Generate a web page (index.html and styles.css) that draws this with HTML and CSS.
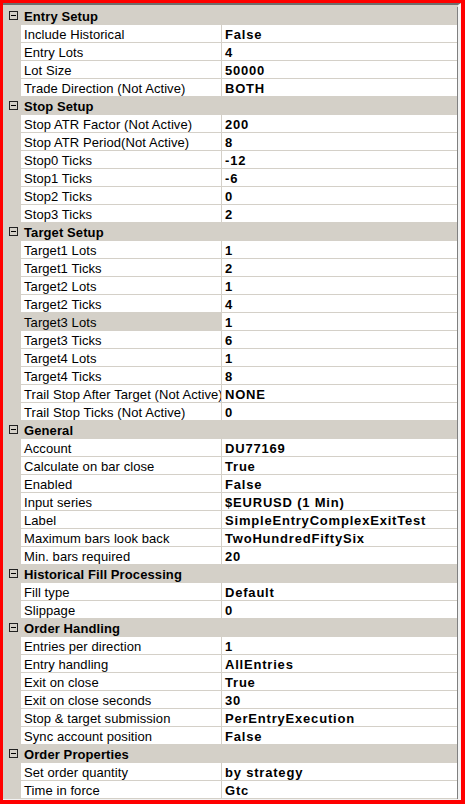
FILE: index.html
```html
<!DOCTYPE html>
<html>
<head>
<meta charset="utf-8">
<link rel="stylesheet" href="styles.css">
</head>
<body>
<div class="frame">
  <div class="grid">
    <div class="cat"><span class="box"></span><span class="cat-name">Entry Setup</span></div>
    <div class="row"><span class="name">Include Historical</span><span class="val">False</span></div>
    <div class="row"><span class="name">Entry Lots</span><span class="val">4</span></div>
    <div class="row"><span class="name">Lot Size</span><span class="val">50000</span></div>
    <div class="row"><span class="name">Trade Direction (Not Active)</span><span class="val">BOTH</span></div>

    <div class="cat"><span class="box"></span><span class="cat-name">Stop Setup</span></div>
    <div class="row"><span class="name">Stop ATR Factor (Not Active)</span><span class="val">200</span></div>
    <div class="row"><span class="name">Stop ATR Period(Not Active)</span><span class="val">8</span></div>
    <div class="row"><span class="name">Stop0 Ticks</span><span class="val">-12</span></div>
    <div class="row"><span class="name">Stop1 Ticks</span><span class="val">-6</span></div>
    <div class="row"><span class="name">Stop2 Ticks</span><span class="val">0</span></div>
    <div class="row"><span class="name">Stop3 Ticks</span><span class="val">2</span></div>

    <div class="cat"><span class="box"></span><span class="cat-name">Target Setup</span></div>
    <div class="row"><span class="name">Target1 Lots</span><span class="val">1</span></div>
    <div class="row"><span class="name">Target1 Ticks</span><span class="val">2</span></div>
    <div class="row"><span class="name">Target2 Lots</span><span class="val">1</span></div>
    <div class="row"><span class="name">Target2 Ticks</span><span class="val">4</span></div>
    <div class="row selected"><span class="name">Target3 Lots</span><span class="val">1</span></div>
    <div class="row"><span class="name">Target3 Ticks</span><span class="val">6</span></div>
    <div class="row"><span class="name">Target4 Lots</span><span class="val">1</span></div>
    <div class="row"><span class="name">Target4 Ticks</span><span class="val">8</span></div>
    <div class="row"><span class="name">Trail Stop After Target (Not Active)</span><span class="val">NONE</span></div>
    <div class="row"><span class="name">Trail Stop Ticks (Not Active)</span><span class="val">0</span></div>

    <div class="cat"><span class="box"></span><span class="cat-name">General</span></div>
    <div class="row"><span class="name">Account</span><span class="val">DU77169</span></div>
    <div class="row"><span class="name">Calculate on bar close</span><span class="val">True</span></div>
    <div class="row"><span class="name">Enabled</span><span class="val">False</span></div>
    <div class="row"><span class="name">Input series</span><span class="val">$EURUSD (1 Min)</span></div>
    <div class="row"><span class="name">Label</span><span class="val">SimpleEntryComplexExitTest</span></div>
    <div class="row"><span class="name">Maximum bars look back</span><span class="val">TwoHundredFiftySix</span></div>
    <div class="row"><span class="name">Min. bars required</span><span class="val">20</span></div>

    <div class="cat"><span class="box"></span><span class="cat-name">Historical Fill Processing</span></div>
    <div class="row"><span class="name">Fill type</span><span class="val">Default</span></div>
    <div class="row"><span class="name">Slippage</span><span class="val">0</span></div>

    <div class="cat"><span class="box"></span><span class="cat-name">Order Handling</span></div>
    <div class="row"><span class="name">Entries per direction</span><span class="val">1</span></div>
    <div class="row"><span class="name">Entry handling</span><span class="val">AllEntries</span></div>
    <div class="row"><span class="name">Exit on close</span><span class="val">True</span></div>
    <div class="row"><span class="name">Exit on close seconds</span><span class="val">30</span></div>
    <div class="row"><span class="name">Stop &amp; target submission</span><span class="val">PerEntryExecution</span></div>
    <div class="row"><span class="name">Sync account position</span><span class="val">False</span></div>

    <div class="cat"><span class="box"></span><span class="cat-name">Order Properties</span></div>
    <div class="row"><span class="name">Set order quantity</span><span class="val">by strategy</span></div>
    <div class="row"><span class="name">Time in force</span><span class="val">Gtc</span></div>
  </div>
</div>
</body>
</html>
```

FILE: styles.css
```css
html, body {
  margin: 0;
  padding: 0;
  background: #ff0000;
  height: 804px;
  overflow: hidden;
}

body {
  padding: 3px 4px 0 3px;
  font-family: "Liberation Sans", Arial, sans-serif;
  font-size: 13px;
  color: #000;
}

.frame {
  width: 455px;
  border-top: 2px solid #6e6e6e;
  border-right: 3px solid #f2f2f2;
  border-bottom: 1px solid #f2f2f2;
  background: #d4d0c8;
  padding-top: 2px;
}

.grid {
  border-right: 1px solid #808080;
  display: flex;
  flex-direction: column;
}

.row, .cat {
  display: grid;
  grid-template-columns: 18px 201px 1px 1fr;
  height: 17px;
  border-bottom: 1px solid #d4d0c8;
  line-height: 17px;
}

.cat {
  display: flex;
  align-items: center;
  background: #d4d0c8;
}

.box {
  width: 7px;
  height: 7px;
  border: 1px solid #222;
  margin-left: 6px;
  margin-right: 6px;
  position: relative;
  flex: none;
}

.box::after {
  content: "";
  position: absolute;
  left: 1px;
  top: 3px;
  width: 5px;
  height: 1px;
  background: #000;
}

.cat-name {
  font-weight: bold;
  padding-top: 1px;
  letter-spacing: 0.1px;
}

.name {
  grid-column: 2;
  background: #fff;
  padding: 2px 0 0 3px;
  height: 15px;
  line-height: 15px;
  white-space: nowrap;
  overflow: hidden;
  border-right: 1px solid #d4d0c8;
  letter-spacing: 0.08px;
}

.selected .name {
  background: #d4d0c8;
}

.val {
  grid-column: 3 / 5;
  background: #fff;
  padding: 2px 0 0 3px;
  height: 15px;
  line-height: 15px;
  font-weight: bold;
  letter-spacing: 0.8px;
  white-space: nowrap;
  overflow: hidden;
}
```
